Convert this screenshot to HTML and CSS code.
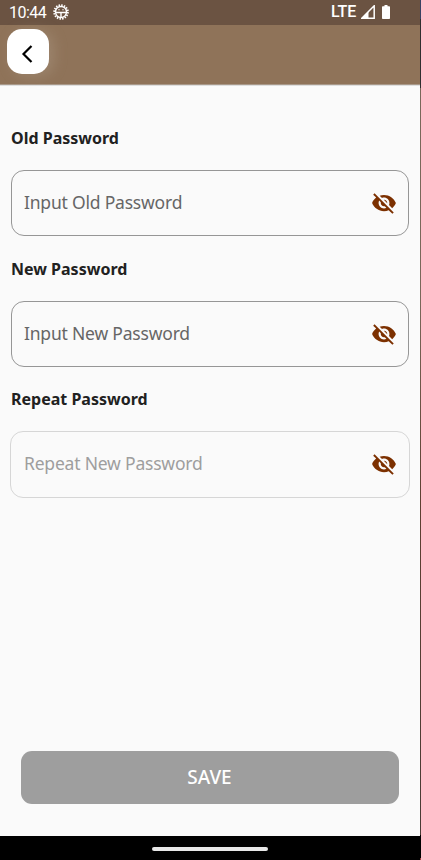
FILE: index.html
```html
<!DOCTYPE html>
<html lang="en">
<head>
<meta charset="utf-8">
<title>Change Password</title>
<link rel="stylesheet" href="styles.css">
</head>
<body>
<svg width="0" height="0" class="defs"><symbol id="eye-off" viewBox="0 0 24 24"><path d="M12 7c2.76 0 5 2.24 5 5 0 .65-.13 1.26-.36 1.83l2.92 2.92c1.51-1.26 2.7-2.89 3.43-4.75-1.73-4.39-6-7.5-11-7.5-1.4 0-2.74.25-3.98.7l2.16 2.16C10.74 7.13 11.35 7 12 7zM2 4.27l2.28 2.28.46.46C3.08 8.3 1.78 10.02 1 12c1.73 4.39 6 7.5 11 7.5 1.55 0 3.03-.3 4.38-.84l.42.42L19.73 22 21 20.73 3.27 3 2 4.27zM7.53 9.8l1.55 1.55c-.05.21-.08.43-.08.65 0 1.66 1.34 3 3 3 .22 0 .44-.03.65-.08l1.55 1.55c-.67.33-1.41.53-2.2.53-2.76 0-5-2.24-5-5 0-.79.2-1.53.53-2.2zm4.31-.78l3.15 3.15.02-.16c0-1.66-1.34-3-3-3l-.17.01z"/></symbol></svg>
<div class="device">
  <div class="screen">
    <header class="status">
      <span class="time">10:44</span>
      <svg class="debug" viewBox="0 0 16 16"><circle cx="8" cy="8" r="6.9" fill="none" stroke="#fff" stroke-width="1.8" stroke-dasharray="1.5 1.21"/><circle cx="8" cy="8" r="5.5" fill="none" stroke="#fff" stroke-width="1.4"/><path d="M3 8.5h10M8 8.5V13" stroke="#fff" stroke-width="1.4"/><circle cx="6" cy="5.7" r=".7" fill="#fff"/><circle cx="10" cy="5.7" r=".7" fill="#fff"/></svg>
      <span class="network">LTE</span>
      <svg class="signal" viewBox="0 0 14 14"><path d="M.8 13.2 13.2.8V13.2Z" fill="none" stroke="#fff" stroke-width="1.5"/><path d="M0 14 7.5 6.5V14Z" fill="#fff"/></svg>
      <svg class="battery" viewBox="0 0 8 14"><path d="M2.5 0h3v1.2h1.7q.8 0 .8.8v11.2q0 .8-.8.8H.8q-.8 0-.8-.8V2q0-.8.8-.8h1.7Z" fill="#fff"/></svg>
    </header>
    <nav class="appbar">
      <button class="back" aria-label="Back"><svg viewBox="0 0 12 18"><path d="M10.5 1 2.5 9l8 8" fill="none" stroke="#000" stroke-width="2.2"/></svg></button>
    </nav>
    <main class="form">
      <label class="label">Old Password</label>
      <div class="field"><span>Input Old Password</span><svg class="eye"><use href="#eye-off"/></svg></div>
      <label class="label">New Password</label>
      <div class="field"><span>Input New Password</span><svg class="eye"><use href="#eye-off"/></svg></div>
      <label class="label">Repeat Password</label>
      <div class="field disabled"><span>Repeat New Password</span><svg class="eye"><use href="#eye-off"/></svg></div>
      <button class="save">SAVE</button>
    </main>
    <footer class="gesture"><div class="pill"></div></footer>
  </div>
  <div class="edge"></div>
</div>
</body>
</html>
```
FILE: styles.css
```css
* { box-sizing: border-box; }
body { margin: 0; font-family: "Noto Sans", sans-serif; }
button { border: 0; padding: 0; font: inherit; }
svg { display: block; flex: none; }
.defs { display: none; }
.device { display: flex; width: 421px; height: 860px; }
.screen { display: flex; flex-direction: column; width: 420px; background: #fafafa; }
.edge { width: 1px; background: linear-gradient(#394263 0 19px, #302e30 19px 88px, #79685a 88px 300px, #5e4032 500px, #493b35 835px, #000 835px 858px, #944 858px); }
.status { display: flex; height: 25px; padding-left: 9px; background: #6b5342; color: #fff; font-family: Roboto, sans-serif; }
.time { width: 43.5px; font-size: 16px; line-height: 25px; letter-spacing: -.5px; }
.debug { width: 16px; height: 16px; margin-top: 4px; }
.network { width: 30px; margin-left: 262.5px; font-size: 16px; font-weight: 500; line-height: 24px; letter-spacing: -.1px; }
.signal { width: 14px; height: 14px; margin-top: 5px; }
.battery { width: 8px; height: 14px; margin: 5px 0 0 7px; }
.appbar { height: 60px; padding: 4px 0 0 7px; background: #8f7359; border-bottom: 1px solid #a89889; }
.back { display: flex; align-items: center; justify-content: center; width: 42px; height: 45px; padding: 4px 3px 0 0; border-radius: 15px; background: #fff; box-shadow: 5px 2px 14px rgba(190,175,160,.3); }
.back svg { width: 12px; height: 18px; }
.form { display: flex; flex-direction: column; height: 751px; padding: 40px 11px 0; border-top: 1px solid #dedede; }
.label { height: 24px; margin-bottom: 20px; color: #212121; font-size: 16px; font-weight: 700; line-height: 24px; }
.field { display: flex; justify-content: space-between; align-items: center; height: 66px; margin-bottom: 20.6px; padding: 0 12px; border: 1px solid #969696; border-radius: 13px; color: #666; font-size: 17.5px; letter-spacing: -.2px; }
.field span { position: relative; top: -1px; }
.eye { width: 26px; height: 26px; margin-right: -.5px; fill: #7c3000; }
.disabled { margin: -.7px -1px 0; height: 67px; padding: 0 13px; border-color: #d6d6d6; color: #9e9e9e; }
.save { height: 53px; margin: auto 10px 32px; padding-right: 1px; border-radius: 11px; background: #9e9e9e; color: #fff; font-size: 19px; font-weight: 500; line-height: 53px; }
.gesture { display: flex; justify-content: center; height: 24px; padding-top: 11px; background: #000; }
.pill { width: 116px; height: 4px; border-radius: 2px; background: #e8e8e8; }
```
